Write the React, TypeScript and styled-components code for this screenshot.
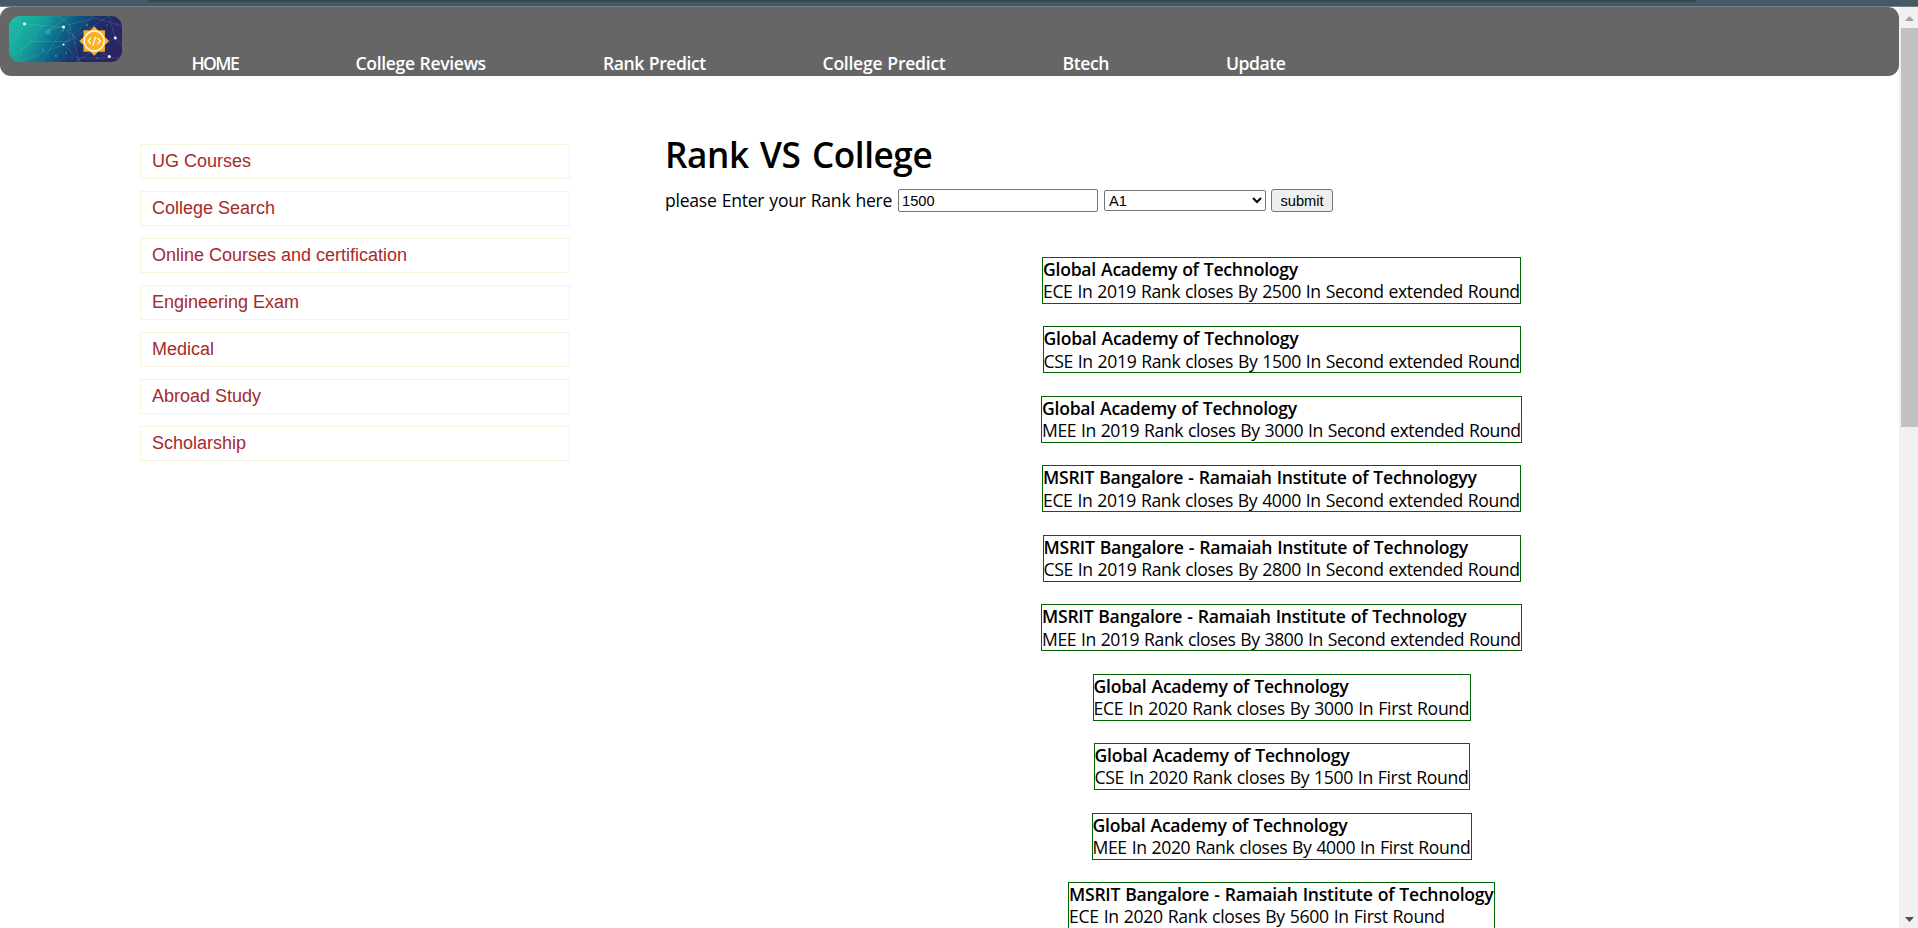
import React from 'react';
import styled, { createGlobalStyle } from 'styled-components';

const GlobalStyle = createGlobalStyle`
  * { box-sizing: border-box; }
  html, body { margin: 0; height: 100%; overflow: hidden; background: #fff; }
  body {
    font-family: 'Trebuchet MS', 'Open Sans', sans-serif;
    font-size: 17.6px;
    word-spacing: 0.7px;
    color: #000;
  }
`;

const Page = styled.div`
  display: flex;
  flex-direction: column;
  height: 928px;
  overflow: hidden;
`;

const BrowserEdge = styled.div`
  flex: none;
  height: 7px;
  padding-left: 147px;
  padding-right: 222px;
  background: #455a64;
  border-bottom: 1px solid #6f828c;
`;

const AddressBarEdge = styled.div`
  height: 2px;
  background: #37474b;
  border-radius: 0 0 6px 6px;
`;

const Viewport = styled.div`
  flex: 1;
  display: flex;
  min-height: 0;
`;

const Content = styled.div`
  flex: 1;
  min-width: 0;
  overflow: hidden;
`;

const Header = styled.header`
  display: flex;
  height: 69px;
  padding-left: 9px;
  background: #666;
  border-radius: 11px;
`;

const Logo = styled.svg`
  flex: none;
  width: 113px;
  height: 46px;
  margin-top: 9px;
  border-radius: 11px;
`;

const Nav = styled.nav`
  display: flex;
  gap: 116px;
  margin-left: 69.5px;
  padding-top: 45px;
`;

const NavLink = styled.a<{ $width: number; $tracking: number }>`
  width: ${p => p.$width}px;
  color: #fff;
  font-weight: 600;
  line-height: 22px;
  letter-spacing: ${p => p.$tracking}px;
  white-space: nowrap;
`;

const Main = styled.main`
  display: flex;
  padding-left: 140px;
`;

const Sidebar = styled.aside`
  display: flex;
  flex-direction: column;
  gap: 12px;
  width: 430px;
  margin-top: 68px;
`;

const SidebarLink = styled.a`
  height: 35px;
  padding: 0 11px;
  border: 1px solid beige;
  color: brown;
  font-family: 'Liberation Sans', Arial, sans-serif;
  font-size: 18px;
  word-spacing: 0;
  line-height: 32px;
`;

const Predictor = styled.section`
  flex: 1;
  margin-left: 95px;
  padding-top: 57px;
`;

const Title = styled.h1`
  margin: 0;
  font-size: 35.2px;
  font-weight: 600;
  line-height: 42px;
  letter-spacing: -0.45px;
  word-spacing: 2.8px;
`;

const RankForm = styled.form`
  display: flex;
  align-items: center;
  height: 23px;
  margin-top: 14px;
`;

const Label = styled.label`
  width: 233px;
  padding-bottom: 2px;
  letter-spacing: -0.25px;
  line-height: 22px;
  white-space: nowrap;
`;

const RankInput = styled.input`
  width: 200px;
  height: 23px;
  padding: 1px 3px;
  border: 1px solid #767676;
  border-radius: 2px;
  background: #fff;
  color: #000;
  font: 14.67px 'Liberation Sans', Arial, sans-serif;
`;

const CategorySelect = styled.select`
  width: 162px;
  height: 21px;
  margin: 0 5px 0 6px;
  padding: 0;
  border: 1px solid #767676;
  border-radius: 2px;
  background: #fff;
  color: #000;
  font: 14.67px 'Liberation Sans', Arial, sans-serif;
`;

const SubmitButton = styled.button`
  width: 62px;
  height: 23px;
  padding: 0;
  border: 1px solid #767676;
  border-radius: 3px;
  background: #efefef;
  color: #000;
  font: 14.67px 'Liberation Sans', Arial, sans-serif;
`;

const Results = styled.div`
  display: flex;
  flex-direction: column;
  align-items: center;
  gap: 22.45px;
  margin-top: 45px;
  padding-right: 1px;
`;

const ResultCard = styled.article<{ $width: number }>`
  flex: none;
  width: ${p => p.$width}px;
  height: 47px;
  border: 1px solid #006400;
  white-space: nowrap;
`;

const CollegeName = styled.h2`
  margin: 0;
  font-size: 17.6px;
  font-weight: 600;
  letter-spacing: -0.25px;
  line-height: 22.4px;
`;

const Cutoff = styled.p<{ $tracking: number }>`
  margin: 0;
  letter-spacing: ${p => p.$tracking}px;
  line-height: 22.4px;
`;

const Scrollbar = styled.div`
  flex: none;
  display: flex;
  flex-direction: column;
  align-items: flex-end;
  width: 19px;
  background: #f1f1f1;
`;

const ScrollArrow = styled.svg`
  flex: none;
  width: 17px;
  height: 21px;
`;

const ScrollThumb = styled.div`
  width: 17px;
  height: 399px;
  margin-bottom: auto;
  background: #c1c1c1;
`;

const navLinks = [
  { text: 'HOME', width: 48, tracking: -1.6 },
  { text: 'College Reviews', width: 131.5, tracking: -0.36 },
  { text: 'Rank Predict', width: 103.5, tracking: -0.44 },
  { text: 'College Predict', width: 124, tracking: -0.27 },
  { text: 'Btech', width: 47.5, tracking: -0.4 },
  { text: 'Update', width: 60, tracking: -0.5 },
];

const sidebarLinks = [
  'UG Courses',
  'College Search',
  'Online Courses and certification',
  'Engineering Exam',
  'Medical',
  'Abroad Study',
  'Scholarship',
];

const GAT = 'Global Academy of Technology';
const MSRIT = 'MSRIT Bangalore - Ramaiah Institute of Technology';

const results = [
  { college: GAT, cutoff: 'ECE In 2019 Rank closes By 2500 In Second extended Round', width: 479, tracking: -0.37 },
  { college: GAT, cutoff: 'CSE In 2019 Rank closes By 1500 In Second extended Round', width: 478, tracking: -0.38 },
  { college: GAT, cutoff: 'MEE In 2019 Rank closes By 3000 In Second extended Round', width: 481, tracking: -0.42 },
  { college: MSRIT + 'y', cutoff: 'ECE In 2019 Rank closes By 4000 In Second extended Round', width: 479, tracking: -0.37 },
  { college: MSRIT, cutoff: 'CSE In 2019 Rank closes By 2800 In Second extended Round', width: 478, tracking: -0.38 },
  { college: MSRIT, cutoff: 'MEE In 2019 Rank closes By 3800 In Second extended Round', width: 481, tracking: -0.42 },
  { college: GAT, cutoff: 'ECE In 2020 Rank closes By 3000 In First Round', width: 378, tracking: -0.31 },
  { college: GAT, cutoff: 'CSE In 2020 Rank closes By 1500 In First Round', width: 376, tracking: -0.35 },
  { college: GAT, cutoff: 'MEE In 2020 Rank closes By 4000 In First Round', width: 380, tracking: -0.37 },
  { college: MSRIT, cutoff: 'ECE In 2020 Rank closes By 5600 In First Round', width: 427, tracking: -0.31 },
];

const dots = [
  [15.5, 8, 1.4], [54.5, 11, 1.5], [54.5, 28.5, 1], [106.3, 22, 1.4], [100.3, 40.5, 1.5],
];

const faintDots = [
  [8, 13, 1], [3, 26, 1.2], [20, 21, 0.8], [33, 10, 1.2], [39, 16, 2.8], [42, 5, 1], [78, 9, 1.2],
  [34, 34, 1.2], [57, 37, 1], [47, 40, 1.2], [66, 27, 0.8], [12, 37, 1.2], [27, 41, 0.8],
  [75, 31, 0.8], [63, 42, 0.8], [98, 9, 0.8], [88, 42, 0.8], [54, 14.5, 1.1], [29, 26, 0.9], [108, 8, 0.7],
];

function LogoMark() {
  return (
    <Logo viewBox="0 0 113 46" preserveAspectRatio="none" aria-label="Logo">
      <defs>
        <linearGradient id="sky" x1="0" y1="0.1" x2="1" y2="0.35">
          <stop offset="0" stopColor="#20bea4" />
          <stop offset="0.26" stopColor="#16a39c" />
          <stop offset="0.52" stopColor="#0c6288" />
          <stop offset="0.74" stopColor="#1c2f69" />
          <stop offset="1" stopColor="#2b2564" />
        </linearGradient>
      </defs>
      <rect width="113" height="46" fill="url(#sky)" />
      <g fill="none" stroke="#b5dce5" strokeWidth="0.5" opacity="0.3">
        <path d="M0 3 15.5 8 54.5 11 72 27 100 40M15.5 8 2 30M42 0 21 25.5H60V8L48 0M54.5 11 33 46M10 46 54.5 28.5 84 0M54.5 28.5 72 46M60 25 100 0 106.3 22 113 30M66 46 106.3 22M61 8 70 46M39 14 86 2 113 10M68 42H113M0 42 60 0" />
      </g>
      {faintDots.map(([x, y, r]) => (
        <circle key={`${x}-${y}`} cx={x} cy={y} r={r} fill="#2fa9cf" opacity="0.65" />
      ))}
      {dots.map(([x, y, r]) => (
        <circle key={`${x}-${y}`} cx={x} cy={y} r={r} fill="#fff" />
      ))}
      <g transform="translate(85.2 25)">
        <rect x="-10.7" y="-10.7" width="21.4" height="21.4" fill="#fbb124" />
        <rect x="-10.5" y="-10.5" width="21" height="21" fill="#fbb124" transform="rotate(45)" />
        <circle r="10" fill="#fbb124" stroke="#fff" strokeWidth="1.3" />
        <path d="M-3.2-3-6.2 0-3.2 3M3.2-3 6.2 0 3.2 3M1.3-4.4-1.3 4.4" fill="none" stroke="#fff" strokeWidth="1.2" />
      </g>
    </Logo>
  );
}

export default function App() {
  return (
    <Page>
      <GlobalStyle />
      <BrowserEdge>
        <AddressBarEdge />
      </BrowserEdge>
      <Viewport>
        <Content>
          <Header>
            <LogoMark />
            <Nav>
              {navLinks.map(link => (
                <NavLink key={link.text} $width={link.width} $tracking={link.tracking}>
                  {link.text}
                </NavLink>
              ))}
            </Nav>
          </Header>
          <Main>
            <Sidebar>
              {sidebarLinks.map(text => (
                <SidebarLink key={text}>{text}</SidebarLink>
              ))}
            </Sidebar>
            <Predictor>
              <Title>Rank VS College</Title>
              <RankForm onSubmit={e => e.preventDefault()}>
                <Label htmlFor="rank">please Enter your Rank here</Label>
                <RankInput id="rank" defaultValue="1500" />
                <CategorySelect defaultValue="A1">
                  <option>A1</option>
                </CategorySelect>
                <SubmitButton type="submit">submit</SubmitButton>
              </RankForm>
              <Results>
                {results.map(r => (
                  <ResultCard key={r.college + r.cutoff} $width={r.width}>
                    <CollegeName>{r.college}</CollegeName>
                    <Cutoff $tracking={r.tracking}>{r.cutoff}</Cutoff>
                  </ResultCard>
                ))}
              </Results>
            </Predictor>
          </Main>
        </Content>
        <Scrollbar>
          <ScrollArrow viewBox="0 0 17 21">
            <path d="M4 14 8.5 9 13 14Z" fill="#a3a3a3" />
          </ScrollArrow>
          <ScrollThumb />
          <ScrollArrow viewBox="0 0 17 21">
            <path d="M4 10 8.5 15 13 10Z" fill="#505050" />
          </ScrollArrow>
        </Scrollbar>
      </Viewport>
    </Page>
  );
}
